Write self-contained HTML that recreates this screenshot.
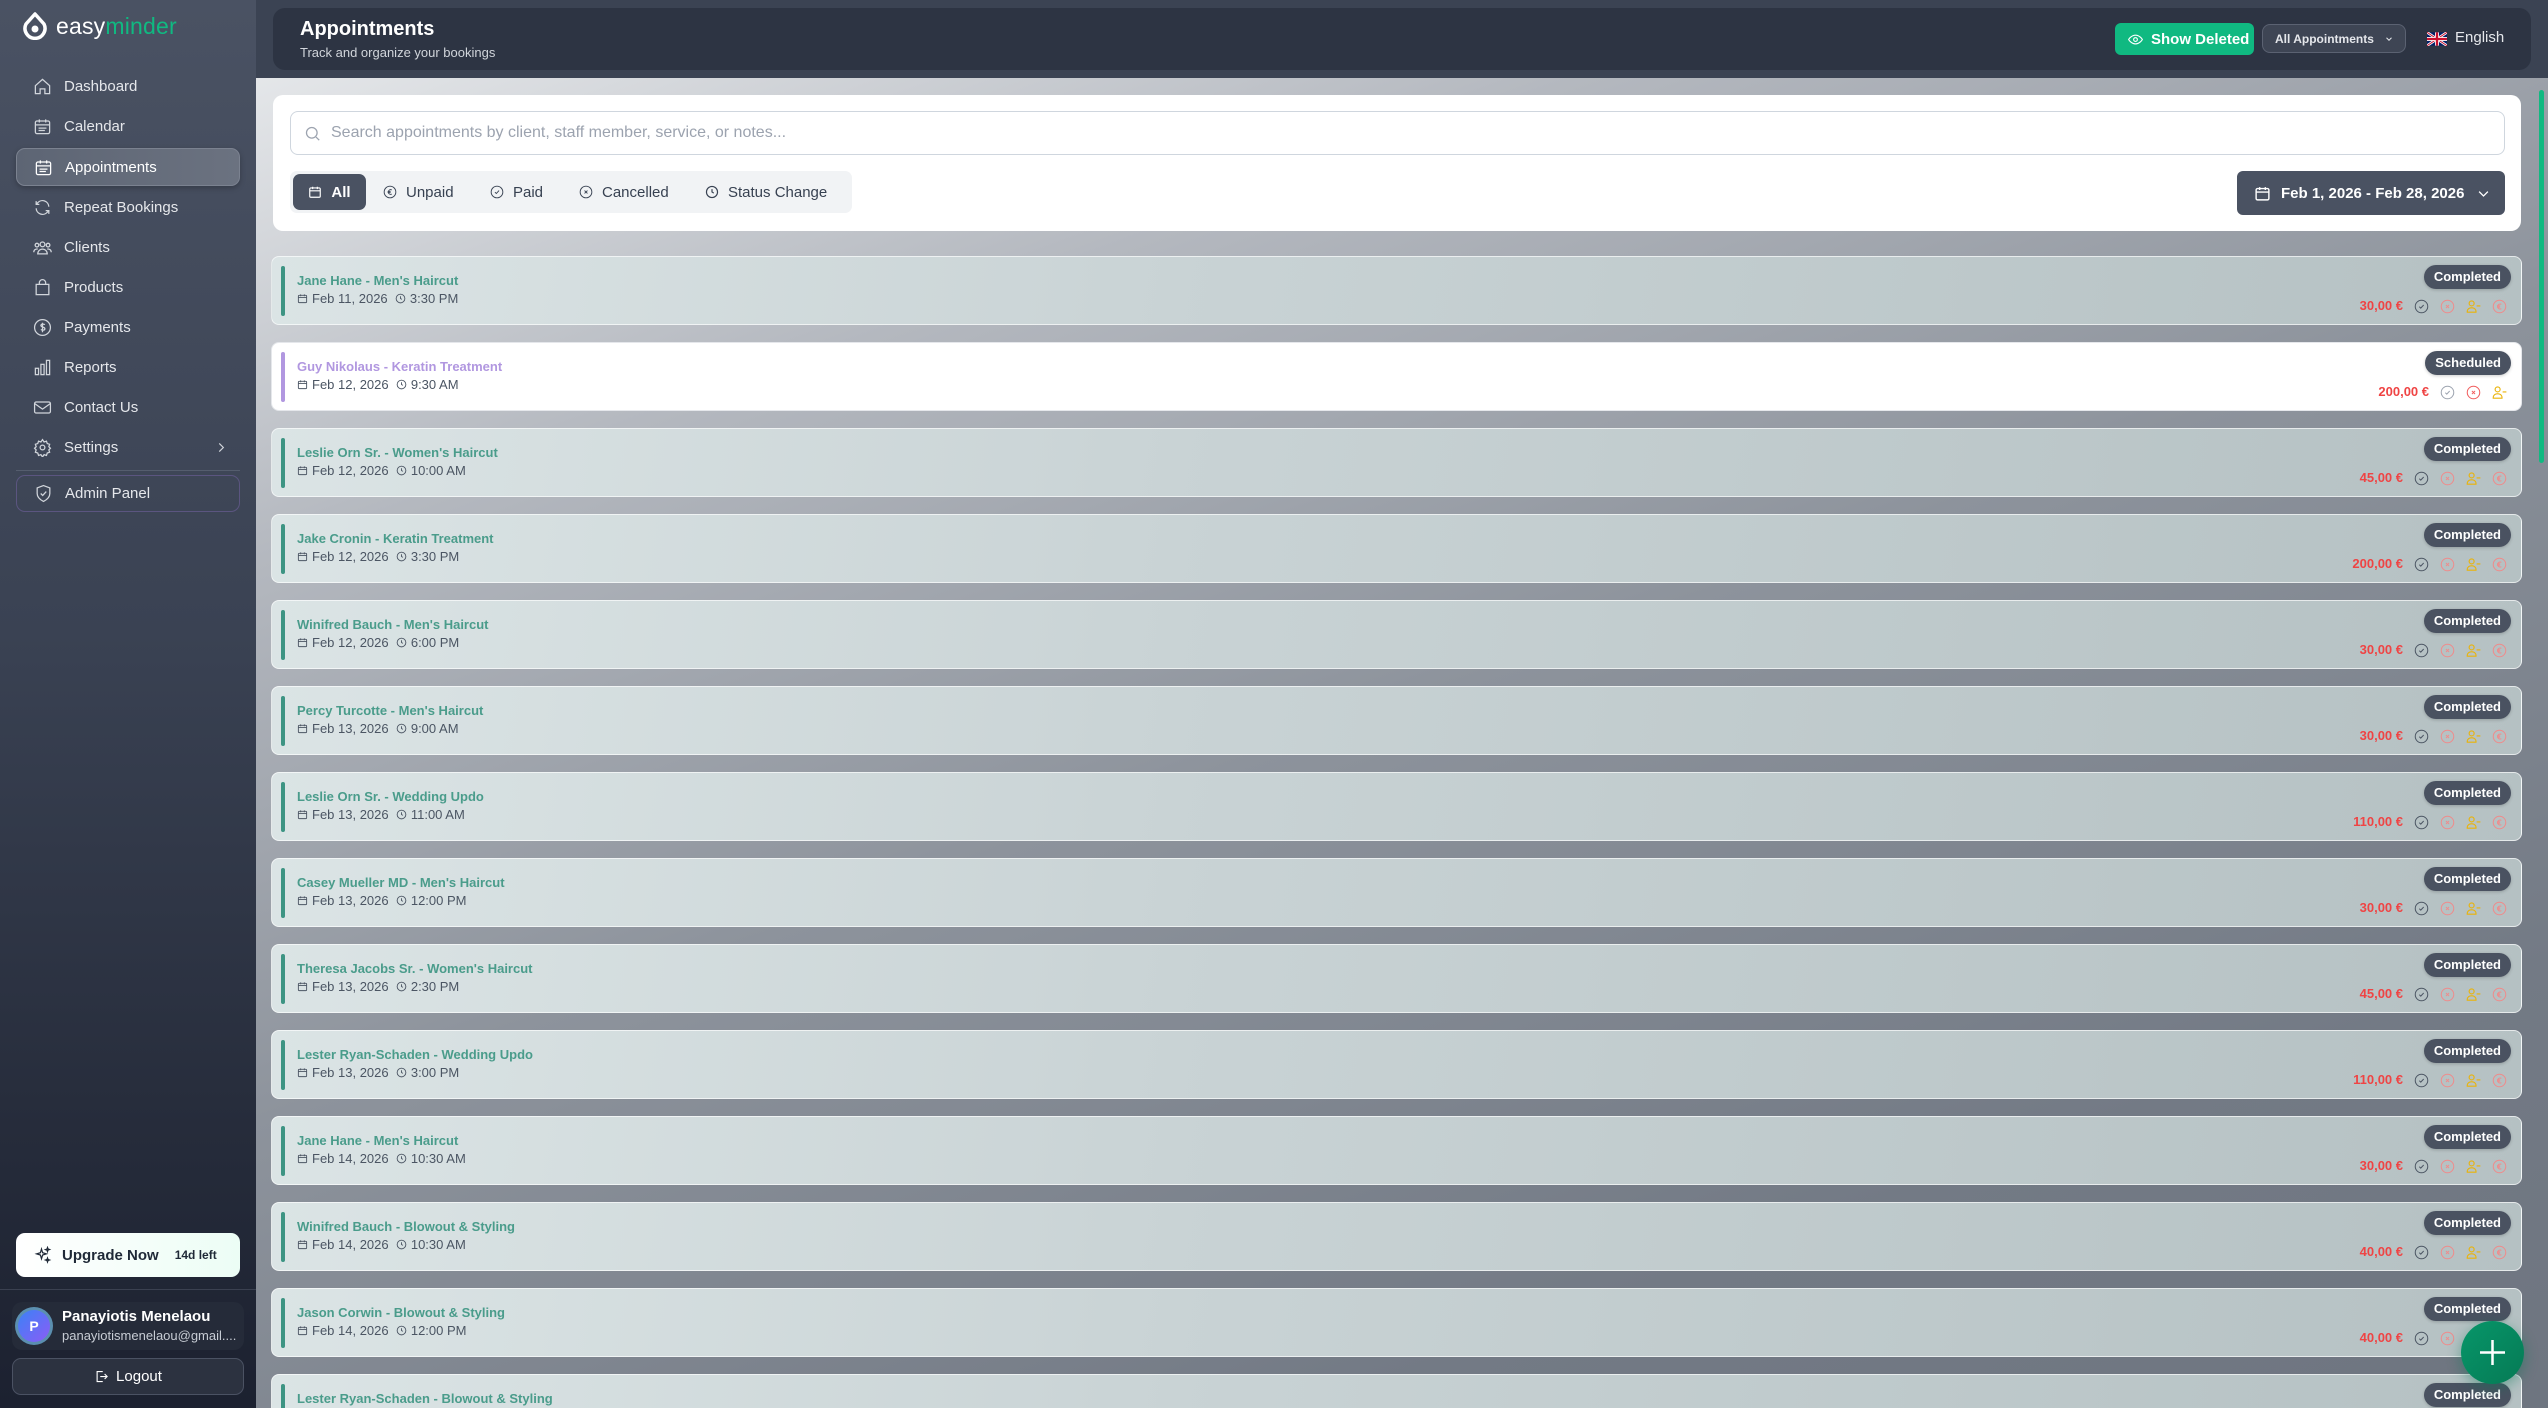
<!DOCTYPE html>
<html><head><meta charset="utf-8">
<style>
*{box-sizing:border-box;margin:0;padding:0}
html{width:2548px;height:1408px;overflow:hidden}
body{width:2548px;height:1408px;overflow:hidden;font-family:"Liberation Sans",sans-serif;position:relative;background:#7b828c}
.clip{position:absolute;left:0;top:0;width:2548px;height:1408px;overflow:hidden}
.sb{position:absolute;left:0;top:0;width:256px;height:1408px;background:linear-gradient(180deg,#4a5263 0%,#3a4253 45%,#262c3b 80%,#1c2130 100%)}
.logo{position:absolute;left:22px;top:12px;display:flex;align-items:center;font-size:23px;color:#fff;letter-spacing:0.2px}
.logo b{font-weight:400;color:#10b981}
.nav{position:absolute;left:16px;width:224px;height:38px;display:flex;align-items:center;color:#e5e7eb;font-size:15px}
.nav svg{position:absolute;left:17px;width:19px;height:19px}
.nav span{position:absolute;left:48px}
.nav.act{background:linear-gradient(90deg,#5d6574,#6b7280);border:1px solid #7b8290;border-radius:9px;color:#fff;box-shadow:0 2px 6px rgba(0,0,0,.25)}
.main{position:absolute;left:256px;top:0;width:2292px;height:1408px;background:linear-gradient(160deg,#eceef0 0%,#b4b8bf 25%,#8d939c 50%,#737a85 80%,#6e7580 100%)}
.topbar{position:absolute;left:256px;top:0;width:2292px;height:78px;background:#3b4353}
.hcard{position:absolute;left:273px;top:8px;width:2258px;height:62px;background:#2d3443;border-radius:12px}
.fcard{position:absolute;left:273px;top:95px;width:2248px;height:136px;background:#fff;border-radius:10px}
.search{position:absolute;left:17px;top:16px;width:2215px;height:44px;border:1px solid #cfd6de;border-radius:8px;display:flex;align-items:center;color:#9ca3af;font-size:16px}
.tabs{position:absolute;left:17px;top:76px;width:562px;height:42px;background:#f1f3f5;border-radius:7px}
.tab{position:absolute;top:3px;height:36px;display:flex;align-items:center;font-size:15px;color:#374151}
.tab svg{width:14px;height:14px;margin-right:9px}
.datebtn{position:absolute;left:1964px;top:76px;width:268px;height:44px;background:#4a5262;border-radius:6px;color:#fff;font-size:15px;font-weight:bold;display:flex;align-items:center}
.row{position:absolute;left:271px;width:2251px;height:69px;border-radius:8px;background:linear-gradient(100deg,#dbe4e5 0%,#c9d3d5 40%,#b5c1c3 100%);border:1px solid rgba(255,255,255,.65)}
.row.w{background:#fff;border-color:#e5e7eb}
.bar{position:absolute;left:9px;top:9px;width:4px;height:50px;background:#3d9483;border-radius:2px}
.row.w .bar{background:#b197e0}
.t{position:absolute;left:25px;top:16px;font-size:13px;font-weight:bold;color:#4a9c8b}
.row.w .t{color:#b197e0}
.d{position:absolute;left:25px;top:34px;font-size:13px;color:#4b5563;display:flex;align-items:center}
.d svg{width:11px;height:11px;margin-right:4px}
.badge{position:absolute;right:10px;top:8px;height:24px;padding:0 10px;border-radius:12px;background:#4a5261;color:#fff;font-size:13px;font-weight:bold;line-height:24px;box-shadow:0 1px 3px rgba(0,0,0,.2)}
.price{position:absolute;right:118px;top:41px;font-size:13px;font-weight:bold;color:#ef4444}
.ic{position:absolute;top:42px;width:15px;height:15px}
</style></head><body><div class="clip">
<svg width="0" height="0" style="position:absolute">
<defs>
<symbol id="chk" viewBox="0 0 24 24"><circle cx="12" cy="12" r="10" fill="none" stroke="currentColor" stroke-width="1.6"/><path d="M8.5 12.3l2.3 2.3 4.7-5" fill="none" stroke="currentColor" stroke-width="1.6"/></symbol>
<symbol id="xc" viewBox="0 0 24 24"><circle cx="12" cy="12" r="10" fill="none" stroke="currentColor" stroke-width="1.6"/><path d="M9.5 9.5l5 5M14.5 9.5l-5 5" fill="none" stroke="currentColor" stroke-width="1.6"/></symbol>
<symbol id="um" viewBox="0 0 24 24"><circle cx="9" cy="7" r="4" fill="none" stroke="currentColor" stroke-width="1.8"/><path d="M2 21v-1a6 6 0 0 1 6-6h2a6 6 0 0 1 6 6v1zM17 11h6" fill="none" stroke="currentColor" stroke-width="1.8"/></symbol>
<symbol id="eu" viewBox="0 0 24 24"><circle cx="12" cy="12" r="10" fill="none" stroke="currentColor" stroke-width="1.6"/><path d="M15 8.5a4 4 0 1 0 0 7M8 11h5M8 13h5" fill="none" stroke="currentColor" stroke-width="1.6"/></symbol>
<symbol id="cal" viewBox="0 0 24 24"><rect x="3" y="5" width="18" height="16" rx="2" fill="none" stroke="currentColor" stroke-width="2"/><path d="M3 10h18M8 3v4M16 3v4" fill="none" stroke="currentColor" stroke-width="2"/></symbol>
<symbol id="clk" viewBox="0 0 24 24"><circle cx="12" cy="12" r="9.5" fill="none" stroke="currentColor" stroke-width="2"/><path d="M12 7v5l3 2" fill="none" stroke="currentColor" stroke-width="2"/></symbol>
</defs></svg>

<div class="sb">
  <div class="logo"><svg width="26" height="28" viewBox="0 0 26 28"><path d="M13 2L4 12a10 10 0 1 0 18 0z" fill="none" stroke="#fff" stroke-width="3.5" stroke-linejoin="round"/><circle cx="13" cy="17" r="3.5" fill="#fff"/></svg><span style="margin-left:8px">easy<b>minder</b></span></div>
  <div class="nav" style="top:67px"><svg viewBox="0 0 24 24" fill="none" stroke="#d1d5db" stroke-width="1.6"><path d="M3 11l9-8 9 8v10h-6v-6h-6v6H3z"/></svg><span>Dashboard</span></div>
  <div class="nav" style="top:107px"><svg viewBox="0 0 24 24" fill="none" stroke="#d1d5db" stroke-width="1.6"><rect x="3" y="5" width="18" height="16" rx="2"/><path d="M3 10h18M8 3v4M16 3v4M7 14h10M7 17h8"/></svg><span>Calendar</span></div>
  <div class="nav act" style="top:148px"><svg viewBox="0 0 24 24" fill="none" stroke="#fff" stroke-width="1.6"><rect x="3" y="5" width="18" height="16" rx="2"/><path d="M3 10h18M8 3v4M16 3v4M7 14h10M7 17h8"/></svg><span>Appointments</span></div>
  <div class="nav" style="top:188px"><svg viewBox="0 0 24 24" fill="none" stroke="#d1d5db" stroke-width="1.6"><path d="M20 11a8 8 0 0 0-14-5l-2 2M4 4v4h4M4 13a8 8 0 0 0 14 5l2-2M20 20v-4h-4"/></svg><span>Repeat Bookings</span></div>
  <div class="nav" style="top:228px"><svg viewBox="0 0 24 24" fill="none" stroke="#d1d5db" stroke-width="1.6"><circle cx="12" cy="8" r="3"/><circle cx="5" cy="9" r="2.3"/><circle cx="19" cy="9" r="2.3"/><path d="M6 20a6 6 0 0 1 12 0zM1 18a4 4 0 0 1 5-4M23 18a4 4 0 0 0-5-4"/></svg><span>Clients</span></div>
  <div class="nav" style="top:268px"><svg viewBox="0 0 24 24" fill="none" stroke="#d1d5db" stroke-width="1.6"><path d="M4 8h16v13H4zM8 8V6a4 4 0 0 1 8 0v2"/></svg><span>Products</span></div>
  <div class="nav" style="top:308px"><svg viewBox="0 0 24 24" fill="none" stroke="#d1d5db" stroke-width="1.6"><circle cx="12" cy="12" r="10"/><path d="M15 8.5c-1-1-5-1.5-5 1s5 1.5 5 4-4 2-5 1M12 6v12"/></svg><span>Payments</span></div>
  <div class="nav" style="top:348px"><svg viewBox="0 0 24 24" fill="none" stroke="#d1d5db" stroke-width="1.6"><rect x="3" y="13" width="4" height="8"/><rect x="10" y="8" width="4" height="13"/><rect x="17" y="3" width="4" height="18"/></svg><span>Reports</span></div>
  <div class="nav" style="top:388px"><svg viewBox="0 0 24 24" fill="none" stroke="#d1d5db" stroke-width="1.6"><rect x="2" y="5" width="20" height="14" rx="2"/><path d="M2 7l10 7 10-7"/></svg><span>Contact Us</span></div>
  <div class="nav" style="top:428px"><svg viewBox="0 0 24 24" fill="none" stroke="#d1d5db" stroke-width="1.6"><circle cx="12" cy="12" r="3"/><path d="M12 2l2 3 3-1 1 3 3 1-1 3 2 2-2 2 1 3-3 1-1 3-3-1-2 3-2-3-3 1-1-3-3-1 1-3-2-2 2-2-1-3 3-1 1-3 3 1z"/></svg><span>Settings</span><svg style="left:198px;width:14px" viewBox="0 0 24 24" fill="none" stroke="#d1d5db" stroke-width="2"><path d="M9 5l7 7-7 7"/></svg></div>
  <div style="position:absolute;left:16px;top:470px;width:224px;height:1px;background:#555d6e"></div>
  <div class="nav" style="top:475px;height:37px;border:1px solid #5b5580;border-radius:9px"><svg viewBox="0 0 24 24" fill="none" stroke="#d1d5db" stroke-width="1.6"><path d="M12 2l8 3v7c0 5-4 8-8 10-4-2-8-5-8-10V5z"/><path d="M8.5 12l2.5 2.5 4.5-5"/></svg><span>Admin Panel</span></div>
  <div style="position:absolute;left:16px;top:1233px;width:224px;height:44px;border-radius:9px;background:linear-gradient(90deg,#fff,#ecfdf5);display:flex;align-items:center;font-size:15px;font-weight:bold;color:#1f2937"><svg style="margin-left:18px;margin-right:10px" width="18" height="18" viewBox="0 0 24 24" fill="none" stroke="#1f2937" stroke-width="1.6"><path d="M10 4l1.5 5 5 1.5-5 1.5L10 17l-1.5-5-5-1.5 5-1.5zM18 2l.7 2 2 .7-2 .7L18 7.5l-.7-2-2-.7 2-.7zM18 16l.7 2 2 .7-2 .7-.7 2-.7-2-2-.7 2-.7z"/></svg>Upgrade Now<span style="font-size:12px;margin-left:16px">14d left</span></div>
  <div style="position:absolute;left:0;top:1289px;width:256px;height:1px;background:#3a4050"></div>
  <div style="position:absolute;left:12px;top:1302px;width:232px;height:48px;border-radius:10px;background:#252b39"></div>
  <div style="position:absolute;left:15px;top:1307px;width:38px;height:38px;border-radius:50%;background:#5b8fb0;padding:3px"><div style="width:32px;height:32px;border-radius:50%;background:linear-gradient(135deg,#3b82f6,#8b5cf6);color:#fff;font-weight:bold;font-size:14px;text-align:center;line-height:32px">P</div></div>
  <div style="position:absolute;left:62px;top:1308px;color:#fff;font-size:15px;font-weight:bold">Panayiotis Menelaou</div>
  <div style="position:absolute;left:62px;top:1328px;color:#c7ccd4;font-size:13px">panayiotismenelaou@gmail....</div>
  <div style="position:absolute;left:12px;top:1358px;width:232px;height:37px;border-radius:9px;border:1px solid #4b5263;background:#2c3240;color:#fff;font-size:15px;display:flex;align-items:center;justify-content:center"><svg width="15" height="15" viewBox="0 0 24 24" fill="none" stroke="#fff" stroke-width="1.8" style="margin-right:7px"><path d="M14 4H5v16h9M10 12h11M17 8l4 4-4 4"/></svg>Logout</div>
</div>

<div class="main"></div>
<div class="topbar"></div>
<div class="hcard">
  <div style="position:absolute;left:27px;top:10px;font-size:20px;font-weight:bold;color:#fff">Appointments</div>
  <div style="position:absolute;left:27px;top:37px;font-size:13px;color:#d1d5db">Track and organize your bookings</div>
  <div style="position:absolute;left:1842px;top:15px;width:139px;height:32px;border-radius:6px;background:#10b981;color:#fff;font-size:15px;font-weight:bold;display:flex;align-items:center"><svg style="margin:0 8px 0 13px" width="15" height="15" viewBox="0 0 24 24" fill="none" stroke="#fff" stroke-width="1.8"><path d="M1 12s4-7 11-7 11 7 11 7-4 7-11 7S1 12 1 12z"/><circle cx="12" cy="12" r="3"/></svg>Show Deleted</div>
  <div style="position:absolute;left:1989px;top:16px;width:144px;height:29px;border-radius:8px;background:#3e4554;border:1px solid #5b6272;color:#e5e7eb;font-size:12px;font-weight:bold;display:flex;align-items:center;padding-left:12px">All Appointments<svg style="margin-left:10px" width="10" height="10" viewBox="0 0 24 24" fill="none" stroke="#e5e7eb" stroke-width="2.5"><path d="M6 9l6 6 6-6"/></svg></div>
  <svg style="position:absolute;left:2154px;top:24px" width="20" height="14" viewBox="0 0 60 40"><rect width="60" height="40" fill="#012169"/><path d="M0 0L60 40M60 0L0 40" stroke="#fff" stroke-width="8"/><path d="M0 0L60 40M60 0L0 40" stroke="#c8102e" stroke-width="3"/><path d="M30 0v40M0 20h60" stroke="#fff" stroke-width="12"/><path d="M30 0v40M0 20h60" stroke="#c8102e" stroke-width="7"/></svg>
  <div style="position:absolute;left:2182px;top:21px;font-size:15px;color:#e5e7eb">English</div>
</div>

<div class="fcard">
  <div class="search"><svg style="margin:0 10px 0 13px" width="17" height="17" viewBox="0 0 24 24" fill="none" stroke="#9ca3af" stroke-width="1.8"><circle cx="11" cy="11" r="7.5"/><path d="M17 17l4.5 4.5"/></svg>Search appointments by client, staff member, service, or notes...</div>
  <div class="tabs">
    <div class="tab" style="left:3px;width:73px;background:#4a5262;border-radius:7px;color:#fff;font-weight:bold;justify-content:center"><svg viewBox="0 0 24 24" style="color:#fff"><use href="#cal"/></svg>All</div>
    <div class="tab" style="left:93px"><svg viewBox="0 0 24 24" style="color:#374151"><use href="#eu"/></svg>Unpaid</div>
    <div class="tab" style="left:200px"><svg viewBox="0 0 24 24" style="color:#374151"><use href="#chk"/></svg>Paid</div>
    <div class="tab" style="left:289px"><svg viewBox="0 0 24 24" style="color:#374151"><use href="#xc"/></svg>Cancelled</div>
    <div class="tab" style="left:415px"><svg viewBox="0 0 24 24" style="color:#374151"><use href="#clk"/></svg>Status Change</div>
  </div>
  <div class="datebtn"><svg style="margin:0 10px 0 17px;color:#fff" width="17" height="17" viewBox="0 0 24 24"><use href="#cal"/></svg>Feb 1, 2026 - Feb 28, 2026<svg style="margin-left:12px" width="15" height="15" viewBox="0 0 24 24" fill="none" stroke="#fff" stroke-width="2"><path d="M5 9l7 7 7-7"/></svg></div>
</div>

<div class="row" style="top:256px"><div class="bar"></div><div class="t">Jane Hane - Men's Haircut</div><div class="d"><svg viewBox="0 0 24 24"><use href="#cal"/></svg>Feb 11, 2026&nbsp;&nbsp;<svg viewBox="0 0 24 24"><use href="#clk"/></svg>3:30 PM</div><div class="badge">Completed</div><div class="price">30,00 €</div><svg class="ic" style="right:92px;color:#4b5563"><use href="#chk"/></svg><svg class="ic" style="right:66px;color:#f08a8a"><use href="#xc"/></svg><svg class="ic" style="right:40px;color:#eab308"><use href="#um"/></svg><svg class="ic" style="right:14px;color:#f08a8a"><use href="#eu"/></svg></div>
<div class="row w" style="top:342px"><div class="bar"></div><div class="t">Guy Nikolaus - Keratin Treatment</div><div class="d"><svg viewBox="0 0 24 24"><use href="#cal"/></svg>Feb 12, 2026&nbsp;&nbsp;<svg viewBox="0 0 24 24"><use href="#clk"/></svg>9:30 AM</div><div class="badge">Scheduled</div><div class="price" style="right:92px">200,00 €</div><svg class="ic" style="right:66px;color:#9ca3af"><use href="#chk"/></svg><svg class="ic" style="right:40px;color:#f05a5a"><use href="#xc"/></svg><svg class="ic" style="right:14px;color:#eab308"><use href="#um"/></svg></div>
<div class="row" style="top:428px"><div class="bar"></div><div class="t">Leslie Orn Sr. - Women's Haircut</div><div class="d"><svg viewBox="0 0 24 24"><use href="#cal"/></svg>Feb 12, 2026&nbsp;&nbsp;<svg viewBox="0 0 24 24"><use href="#clk"/></svg>10:00 AM</div><div class="badge">Completed</div><div class="price">45,00 €</div><svg class="ic" style="right:92px;color:#4b5563"><use href="#chk"/></svg><svg class="ic" style="right:66px;color:#f08a8a"><use href="#xc"/></svg><svg class="ic" style="right:40px;color:#eab308"><use href="#um"/></svg><svg class="ic" style="right:14px;color:#f08a8a"><use href="#eu"/></svg></div>
<div class="row" style="top:514px"><div class="bar"></div><div class="t">Jake Cronin - Keratin Treatment</div><div class="d"><svg viewBox="0 0 24 24"><use href="#cal"/></svg>Feb 12, 2026&nbsp;&nbsp;<svg viewBox="0 0 24 24"><use href="#clk"/></svg>3:30 PM</div><div class="badge">Completed</div><div class="price">200,00 €</div><svg class="ic" style="right:92px;color:#4b5563"><use href="#chk"/></svg><svg class="ic" style="right:66px;color:#f08a8a"><use href="#xc"/></svg><svg class="ic" style="right:40px;color:#eab308"><use href="#um"/></svg><svg class="ic" style="right:14px;color:#f08a8a"><use href="#eu"/></svg></div>
<div class="row" style="top:600px"><div class="bar"></div><div class="t">Winifred Bauch - Men's Haircut</div><div class="d"><svg viewBox="0 0 24 24"><use href="#cal"/></svg>Feb 12, 2026&nbsp;&nbsp;<svg viewBox="0 0 24 24"><use href="#clk"/></svg>6:00 PM</div><div class="badge">Completed</div><div class="price">30,00 €</div><svg class="ic" style="right:92px;color:#4b5563"><use href="#chk"/></svg><svg class="ic" style="right:66px;color:#f08a8a"><use href="#xc"/></svg><svg class="ic" style="right:40px;color:#eab308"><use href="#um"/></svg><svg class="ic" style="right:14px;color:#f08a8a"><use href="#eu"/></svg></div>
<div class="row" style="top:686px"><div class="bar"></div><div class="t">Percy Turcotte - Men's Haircut</div><div class="d"><svg viewBox="0 0 24 24"><use href="#cal"/></svg>Feb 13, 2026&nbsp;&nbsp;<svg viewBox="0 0 24 24"><use href="#clk"/></svg>9:00 AM</div><div class="badge">Completed</div><div class="price">30,00 €</div><svg class="ic" style="right:92px;color:#4b5563"><use href="#chk"/></svg><svg class="ic" style="right:66px;color:#f08a8a"><use href="#xc"/></svg><svg class="ic" style="right:40px;color:#eab308"><use href="#um"/></svg><svg class="ic" style="right:14px;color:#f08a8a"><use href="#eu"/></svg></div>
<div class="row" style="top:772px"><div class="bar"></div><div class="t">Leslie Orn Sr. - Wedding Updo</div><div class="d"><svg viewBox="0 0 24 24"><use href="#cal"/></svg>Feb 13, 2026&nbsp;&nbsp;<svg viewBox="0 0 24 24"><use href="#clk"/></svg>11:00 AM</div><div class="badge">Completed</div><div class="price">110,00 €</div><svg class="ic" style="right:92px;color:#4b5563"><use href="#chk"/></svg><svg class="ic" style="right:66px;color:#f08a8a"><use href="#xc"/></svg><svg class="ic" style="right:40px;color:#eab308"><use href="#um"/></svg><svg class="ic" style="right:14px;color:#f08a8a"><use href="#eu"/></svg></div>
<div class="row" style="top:858px"><div class="bar"></div><div class="t">Casey Mueller MD - Men's Haircut</div><div class="d"><svg viewBox="0 0 24 24"><use href="#cal"/></svg>Feb 13, 2026&nbsp;&nbsp;<svg viewBox="0 0 24 24"><use href="#clk"/></svg>12:00 PM</div><div class="badge">Completed</div><div class="price">30,00 €</div><svg class="ic" style="right:92px;color:#4b5563"><use href="#chk"/></svg><svg class="ic" style="right:66px;color:#f08a8a"><use href="#xc"/></svg><svg class="ic" style="right:40px;color:#eab308"><use href="#um"/></svg><svg class="ic" style="right:14px;color:#f08a8a"><use href="#eu"/></svg></div>
<div class="row" style="top:944px"><div class="bar"></div><div class="t">Theresa Jacobs Sr. - Women's Haircut</div><div class="d"><svg viewBox="0 0 24 24"><use href="#cal"/></svg>Feb 13, 2026&nbsp;&nbsp;<svg viewBox="0 0 24 24"><use href="#clk"/></svg>2:30 PM</div><div class="badge">Completed</div><div class="price">45,00 €</div><svg class="ic" style="right:92px;color:#4b5563"><use href="#chk"/></svg><svg class="ic" style="right:66px;color:#f08a8a"><use href="#xc"/></svg><svg class="ic" style="right:40px;color:#eab308"><use href="#um"/></svg><svg class="ic" style="right:14px;color:#f08a8a"><use href="#eu"/></svg></div>
<div class="row" style="top:1030px"><div class="bar"></div><div class="t">Lester Ryan-Schaden - Wedding Updo</div><div class="d"><svg viewBox="0 0 24 24"><use href="#cal"/></svg>Feb 13, 2026&nbsp;&nbsp;<svg viewBox="0 0 24 24"><use href="#clk"/></svg>3:00 PM</div><div class="badge">Completed</div><div class="price">110,00 €</div><svg class="ic" style="right:92px;color:#4b5563"><use href="#chk"/></svg><svg class="ic" style="right:66px;color:#f08a8a"><use href="#xc"/></svg><svg class="ic" style="right:40px;color:#eab308"><use href="#um"/></svg><svg class="ic" style="right:14px;color:#f08a8a"><use href="#eu"/></svg></div>
<div class="row" style="top:1116px"><div class="bar"></div><div class="t">Jane Hane - Men's Haircut</div><div class="d"><svg viewBox="0 0 24 24"><use href="#cal"/></svg>Feb 14, 2026&nbsp;&nbsp;<svg viewBox="0 0 24 24"><use href="#clk"/></svg>10:30 AM</div><div class="badge">Completed</div><div class="price">30,00 €</div><svg class="ic" style="right:92px;color:#4b5563"><use href="#chk"/></svg><svg class="ic" style="right:66px;color:#f08a8a"><use href="#xc"/></svg><svg class="ic" style="right:40px;color:#eab308"><use href="#um"/></svg><svg class="ic" style="right:14px;color:#f08a8a"><use href="#eu"/></svg></div>
<div class="row" style="top:1202px"><div class="bar"></div><div class="t">Winifred Bauch - Blowout &amp; Styling</div><div class="d"><svg viewBox="0 0 24 24"><use href="#cal"/></svg>Feb 14, 2026&nbsp;&nbsp;<svg viewBox="0 0 24 24"><use href="#clk"/></svg>10:30 AM</div><div class="badge">Completed</div><div class="price">40,00 €</div><svg class="ic" style="right:92px;color:#4b5563"><use href="#chk"/></svg><svg class="ic" style="right:66px;color:#f08a8a"><use href="#xc"/></svg><svg class="ic" style="right:40px;color:#eab308"><use href="#um"/></svg><svg class="ic" style="right:14px;color:#f08a8a"><use href="#eu"/></svg></div>
<div class="row" style="top:1288px"><div class="bar"></div><div class="t">Jason Corwin - Blowout &amp; Styling</div><div class="d"><svg viewBox="0 0 24 24"><use href="#cal"/></svg>Feb 14, 2026&nbsp;&nbsp;<svg viewBox="0 0 24 24"><use href="#clk"/></svg>12:00 PM</div><div class="badge">Completed</div><div class="price">40,00 €</div><svg class="ic" style="right:92px;color:#4b5563"><use href="#chk"/></svg><svg class="ic" style="right:66px;color:#f08a8a"><use href="#xc"/></svg><svg class="ic" style="right:40px;color:#eab308"><use href="#um"/></svg><svg class="ic" style="right:14px;color:#f08a8a"><use href="#eu"/></svg></div>
<div class="row" style="top:1374px"><div class="bar"></div><div class="t">Lester Ryan-Schaden - Blowout &amp; Styling</div><div class="badge">Completed</div></div>

<div style="position:absolute;left:2539px;top:90px;width:5px;height:373px;border-radius:3px;background:#10b981"></div>
<div style="position:absolute;left:2461px;top:1321px;width:63px;height:63px;border-radius:50%;background:linear-gradient(135deg,#079669,#067a55);box-shadow:0 4px 14px rgba(6,120,85,.45)"><svg width="63" height="63" viewBox="0 0 63 63"><path d="M31.5 19v25M19 31.5h25" stroke="#fff" stroke-width="2.5"/></svg></div>
</div></body></html>
